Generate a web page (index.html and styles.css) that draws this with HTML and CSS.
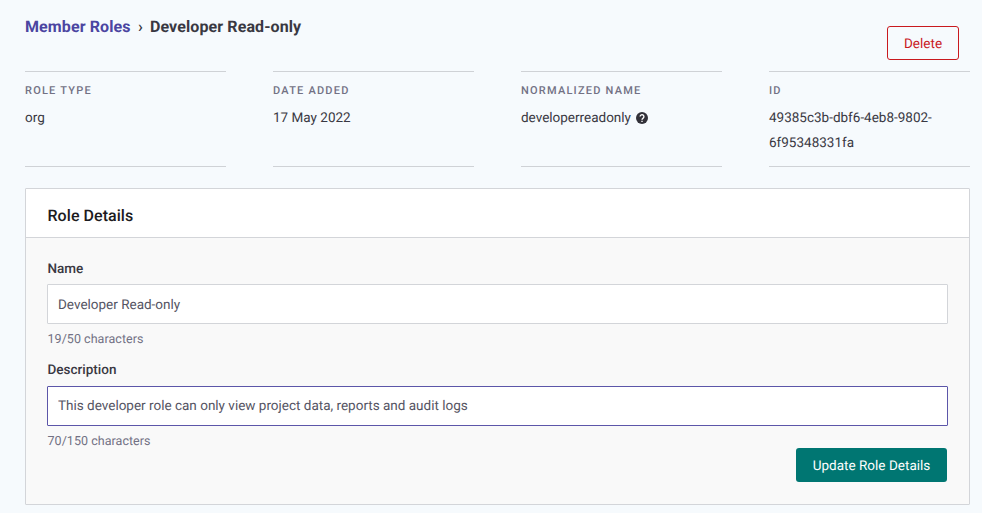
FILE: index.html
```html
<!DOCTYPE html>
<html lang="en">
<head>
<meta charset="utf-8">
<title>Member Roles</title>
<link rel="stylesheet" href="styles.css">
</head>
<body>
<main class="page">
  <header class="page-header">
    <nav class="breadcrumb"><a href="#">Member Roles</a><span class="sep">›</span><span class="current">Developer Read-only</span></nav>
    <button class="btn btn-danger" type="button">Delete</button>
  </header>
  <dl class="facts">
    <div class="fact"><dt>ROLE TYPE</dt><dd>org</dd></div>
    <div class="fact"><dt>DATE ADDED</dt><dd>17 May 2022</dd></div>
    <div class="fact"><dt>NORMALIZED NAME</dt><dd class="with-icon">developerreadonly
      <svg class="help" viewBox="0 0 24 24" aria-hidden="true"><circle cx="12" cy="12" r="12"/><path d="M8.2 9.2a3.8 3.8 0 1 1 6.3 2.9c-1.4 1.2-2.5 1.7-2.5 3.4M12 17.4v2.5"/></svg></dd></div>
    <div class="fact"><dt>ID</dt><dd>49385c3b-dbf6-4eb8-9802-6f95348331fa</dd></div>
  </dl>
  <section class="card">
    <h2 class="card-header">Role Details</h2>
    <form class="card-body">
      <label for="name">Name</label>
      <input id="name" type="text" value="Developer Read-only">
      <p class="hint">19/50 characters</p>
      <label for="description">Description</label>
      <input id="description" class="active" type="text" value="This developer role can only view project data, reports and audit logs">
      <p class="hint">70/150 characters</p>
      <div class="actions"><button class="btn btn-primary" type="button">Update Role Details</button></div>
    </form>
  </section>
</main>
</body>
</html>
```
FILE: styles.css
```css
* { box-sizing: border-box; }
body {
  margin: 0;
  background: #f6fafd;
  color: #393842;
  font-family: Roboto, "Liberation Sans", sans-serif;
  font-size: 13.5px;
  text-rendering: geometricPrecision;
}
.page { width: 970px; padding: 0 0 8px 25px; }
.page-header {
  display: flex;
  justify-content: space-between;
  height: 71px;
  padding: 14px 11px 0 0;
}
.breadcrumb {
  display: flex;
  font-size: 16px;
  font-weight: 700;
  line-height: 25px;
  letter-spacing: 0.1px;
}
.breadcrumb a { color: #4b45a1; text-decoration: none; }
.sep { margin: 0 7px 0 7.5px; font-weight: 500; }
.btn {
  height: 34px;
  padding: 2px 0 0;
  border: 1px solid transparent;
  border-radius: 3px;
  font: 400 13.5px/30px Roboto, "Liberation Sans", sans-serif;
  letter-spacing: 0.02px;
  text-rendering: inherit;
}
.btn-danger { width: 72px; margin-top: 12px; background: transparent; border-color: #c9191e; color: #c9191e; }
.btn-primary { width: 151px; background: #007672; color: #fff; }
.facts {
  display: grid;
  grid-template-columns: repeat(4, 201px);
  column-gap: 47px;
  margin: 0 0 21px;
}
.fact {
  height: 96px;
  padding-top: 10px;
  border-top: 1px solid #cfd2d6;
  border-bottom: 1px solid #cfd2d6;
}
dt {
  color: #727184;
  font-size: 11px;
  font-weight: 500;
  line-height: 18px;
  letter-spacing: 1.22px;
}
dd { margin: 6px 0 0; line-height: 25px; }
.with-icon { display: flex; align-items: center; gap: 5px; }
.help { width: 12px; height: 12px; margin-top: -1px; }
.help circle { fill: #323139; }
.help path { fill: none; stroke: #fff; stroke-width: 2.7; }
.card { height: 317px; border: 1px solid #d3d5d9; border-radius: 1px; background: #f9f9f9; }
.card-header {
  height: 49px;
  margin: 0;
  padding-left: 21.5px;
  border-bottom: 1px solid #d3d5d9;
  background: #fff;
  color: #1c1b20;
  font-size: 16px;
  font-weight: 500;
  line-height: 53px;
  letter-spacing: 0.05px;
}
.card-body { padding: 21px 21px 0; }
label { display: block; height: 25px; padding-left: 0.5px; font-weight: 500; line-height: 20px; }
.hint + label { line-height: 18px; }
input {
  display: block;
  width: 901px;
  height: 40px;
  padding: 2px 10px 0;
  border: 1px solid #d3d5d9;
  border-radius: 1px;
  outline: 0;
  background: #fff;
  color: #555463;
  font: 400 13.5px Roboto, "Liberation Sans", sans-serif;
  text-rendering: inherit;
}
input.active { padding-top: 0; border-color: #5c56a9; }
.hint { height: 37px; margin: 0; padding-left: 0.5px; color: #727184; font-size: 12.5px; line-height: 32px; letter-spacing: 0.04px; }
.actions { display: flex; justify-content: flex-end; margin: -15px 1px 0 0; }
```
